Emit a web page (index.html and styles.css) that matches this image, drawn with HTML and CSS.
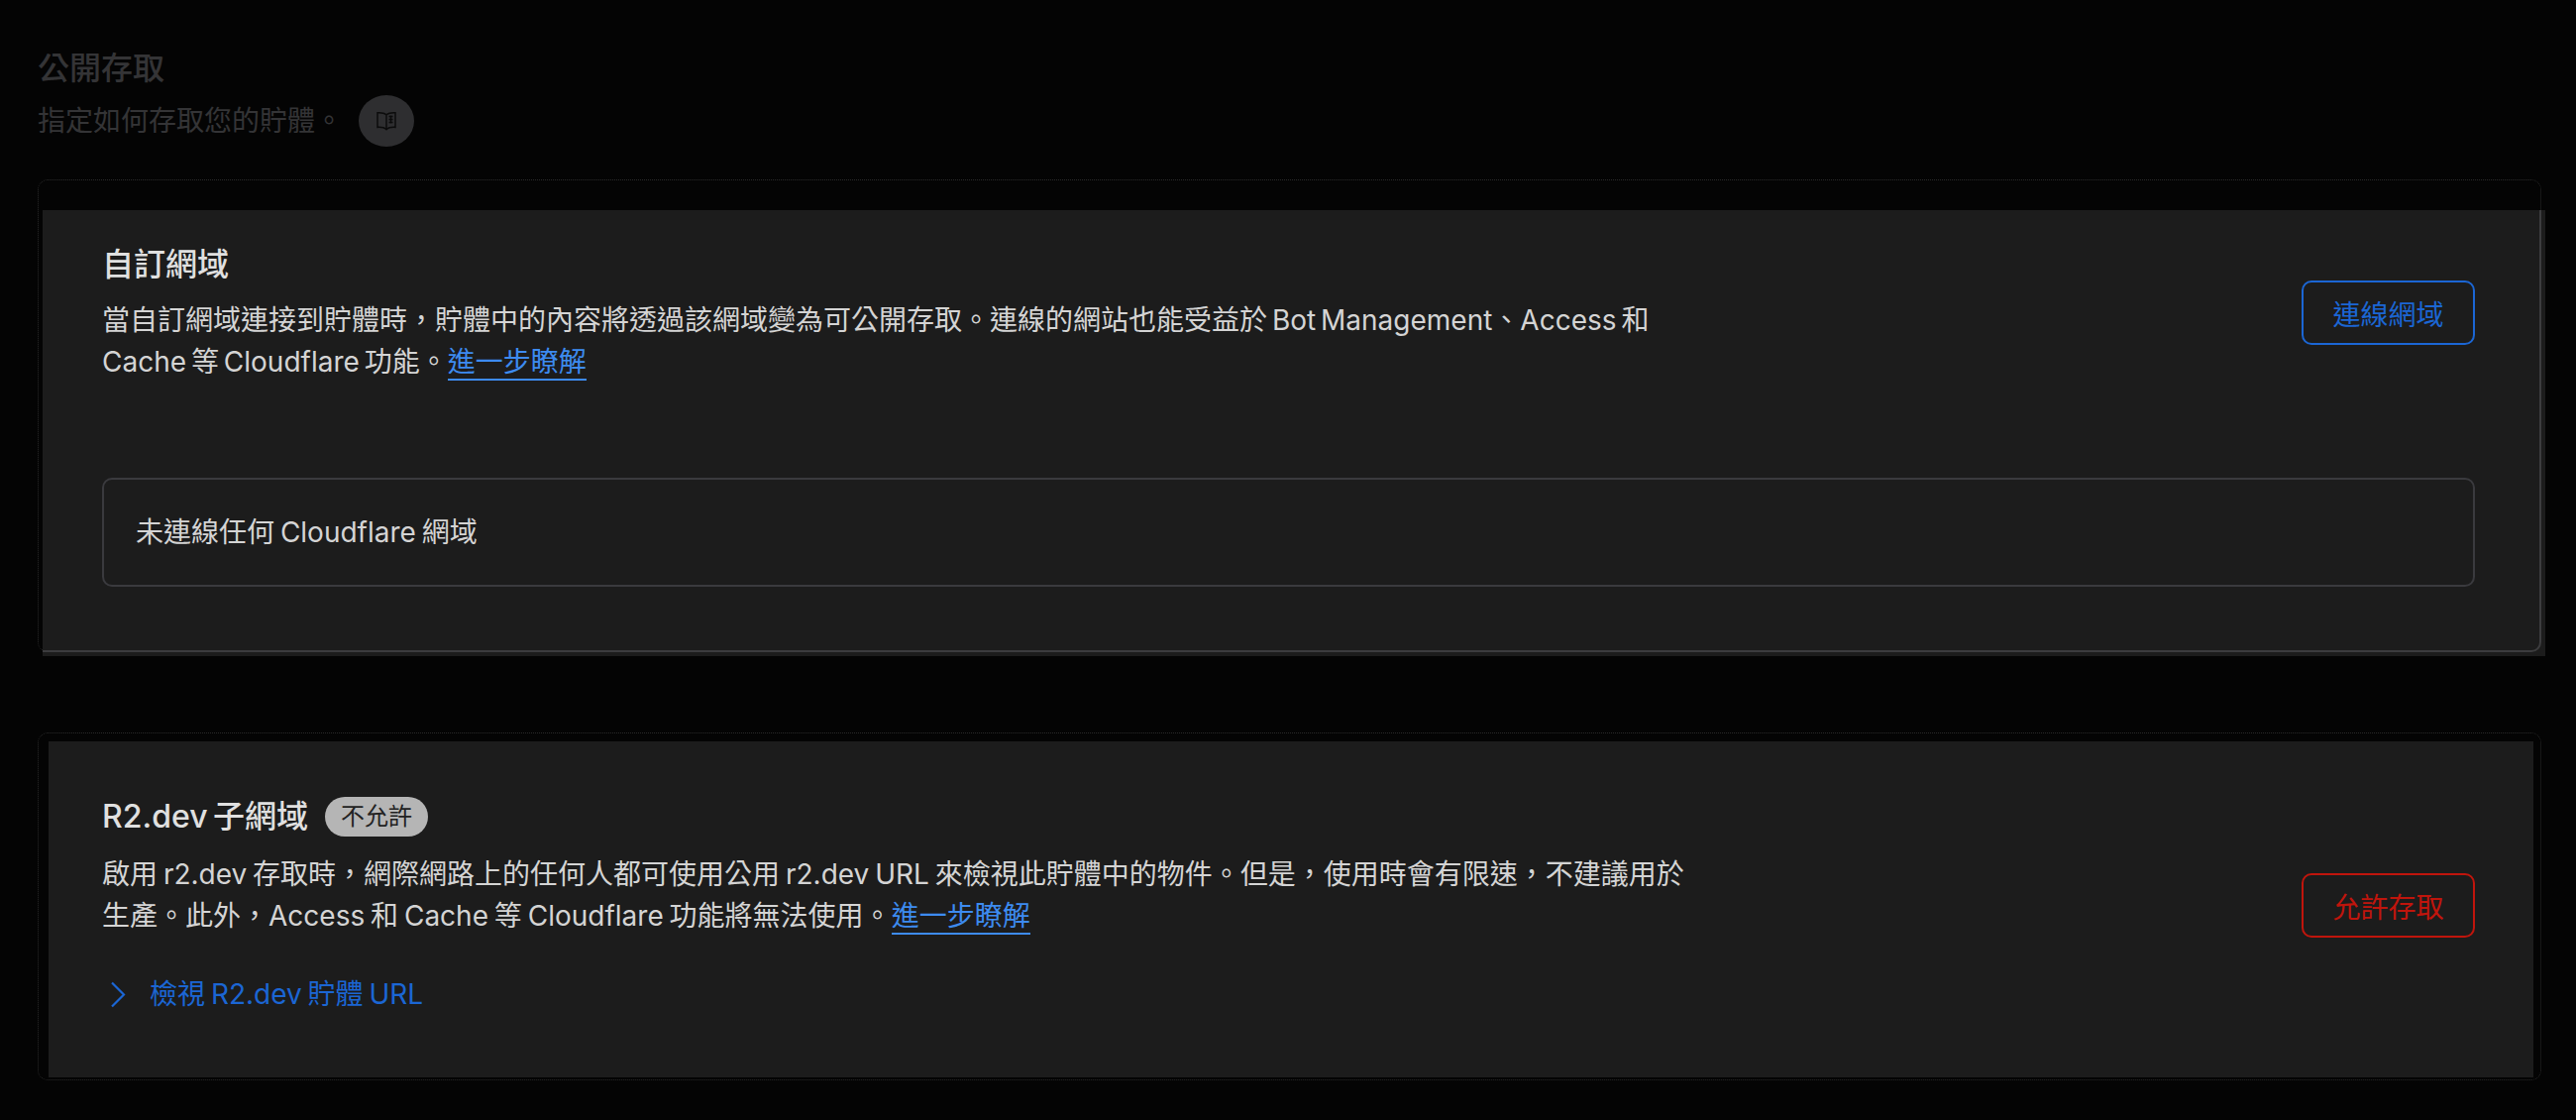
FILE: index.html
```html
<!DOCTYPE html>
<html lang="zh-Hant">
<head>
    <meta charset="UTF-8">
    <meta name="viewport" content="width=device-width, initial-scale=1.0">
    <title>公開存取</title>
    <link rel="stylesheet" href="styles.css">
</head>
<body>
    <div class="page">
        <div class="page-head">
            <h1>公開存取</h1>
            <div class="page-sub">
                <span>指定如何存取您的貯體。</span>
                <span class="doc-btn">
                    <svg width="20" height="20" viewBox="0 0 20 20" fill="none" stroke="#0c0c0c" stroke-width="1.5">
                        <path d="M10 3.8C8.4 2.4 5 1.6 1 1.8V16.4C5 16.2 8.4 17 10 18.6C11.6 17 15 16.2 19 16.4V1.8C15 1.6 11.6 2.4 10 3.8ZM10 3.8V18.6"/>
                        <path d="M12.5 5.5H16.5M12.5 8.5H16.5M12.5 11.5H16.5M14.5 4.5V12.5"/>
                    </svg>
                </span>
            </div>
        </div>

        <div class="card card-domain">
            <div class="panel panel-domain">
                <div class="panel-row">
                    <div class="panel-text">
                        <h2>自訂網域</h2>
                        <p>當自訂網域連接到貯體時，貯體中的內容將透過該網域變為可公開存取。連線的網站也能受益於 Bot Management、Access 和 Cache 等 Cloudflare 功能。<a href="#">進一步瞭解</a></p>
                    </div>
                    <button class="btn btn-blue" type="button">連線網域</button>
                </div>
                <div class="empty-box">未連線任何 Cloudflare 網域</div>
            </div>
        </div>

        <div class="card card-dev">
            <div class="panel panel-dev">
                <div class="panel-row">
                    <div class="panel-text">
                        <h2>R2.dev 子網域 <span class="badge">不允許</span></h2>
                        <p>啟用 r2.dev 存取時，網際網路上的任何人都可使用公用 r2.dev URL 來檢視此貯體中的物件。但是，使用時會有限速，不建議用於生產。此外，Access 和 Cache 等 Cloudflare 功能將無法使用。<a href="#">進一步瞭解</a></p>
                    </div>
                    <button class="btn btn-red" type="button">允許存取</button>
                </div>
                <div class="expand-row">
                    <svg width="16" height="27" viewBox="0 0 16 27" fill="none" stroke="#1b66d4" stroke-width="2.2">
                        <path d="M2 1.5L14 13.5L2 25.5"/>
                    </svg>
                    <span>檢視 R2.dev 貯體 URL</span>
                </div>
            </div>
        </div>
    </div>
</body>
</html>
```

FILE: styles.css
```css
* { box-sizing: border-box; }
html, body { margin: 0; padding: 0; }
body {
    background: #040404;
    color: #d4d4d4;
    font-family: Inter, "Noto Sans CJK TC", sans-serif;
    font-size: 28px;
    line-height: 42px;
    word-spacing: -2px;
}
.page { width: 2600px; height: 1130px; padding: 48px 35px 0 38px; overflow: hidden; }

.page-head { color: #343436; }
.page-head h1 { margin: 0; font-size: 32px; line-height: 42px; font-weight: 500; }
.page-sub { display: flex; align-items: center; gap: 16px; margin-top: 6px; height: 52px; }
.doc-btn {
    display: flex;
    align-items: center;
    justify-content: center;
    width: 56px;
    height: 52px;
    border-radius: 50%;
    background: #2e2e30;
}

.card { position: relative; border: 1px dotted #2a2a2a; border-radius: 10px; }
.card-domain { margin-top: 33px; height: 477px; padding: 30px 0 0 4px; }
.card-domain::after {
    content: "";
    position: absolute;
    top: 30px;
    left: 4px;
    right: -1px;
    bottom: -1px;
    border-right: 2px solid #3c3c3e;
    border-bottom: 2px solid #3c3c3e;
    border-bottom-right-radius: 10px;
}
.card-dev { margin-top: 81px; height: 351px; padding: 8px 7px 1px 10px; }

.panel { background: #1c1c1c; }
.panel-domain { width: 2526px; height: 450px; padding: 34px 71px 0 60px; }
.panel-dev { height: 339px; padding: 55px 59px 0 54px; }

.panel-row { display: flex; justify-content: space-between; align-items: flex-start; }
.panel-text { width: 1610px; }
.panel-text h2 {
    display: flex;
    align-items: center;
    gap: 17px;
    margin: 0;
    font-size: 32px;
    line-height: 42px;
    font-weight: 500;
    word-spacing: -3px;
    color: #e0e0e0;
}
.panel-text p { margin: 14px 0 0; }
.panel-domain .panel-text p { word-spacing: -3px; }
.panel-dev .panel-text p { margin-top: 16px; }
.panel-text a { color: #3d8bf0; text-decoration: none; border-bottom: 2px solid #3d8bf0; }

.badge {
    display: inline-block;
    padding: 0 16px;
    height: 40px;
    line-height: 40px;
    border-radius: 20px;
    background: #b5b5b5;
    color: #222;
    font-size: 24px;
    font-weight: 400;
}

.btn {
    width: 175px;
    height: 65px;
    padding: 0;
    background: none;
    border: 2px solid;
    border-radius: 10px;
    font-family: inherit;
    font-size: 28px;
    cursor: pointer;
}
.btn-blue { margin-top: 37px; color: #1b66d4; border-color: #1b66d4; }
.btn-red { margin-top: 78px; color: #c0150c; border-color: #c0150c; }

.empty-box {
    margin-top: 96px;
    height: 110px;
    padding: 0 32px;
    display: flex;
    align-items: center;
    border: 2px solid #3a3a3e;
    border-radius: 10px;
}

.expand-row {
    display: flex;
    align-items: center;
    gap: 24px;
    margin-top: 36px;
    padding-left: 8px;
    color: #1b66d4;
}
```
